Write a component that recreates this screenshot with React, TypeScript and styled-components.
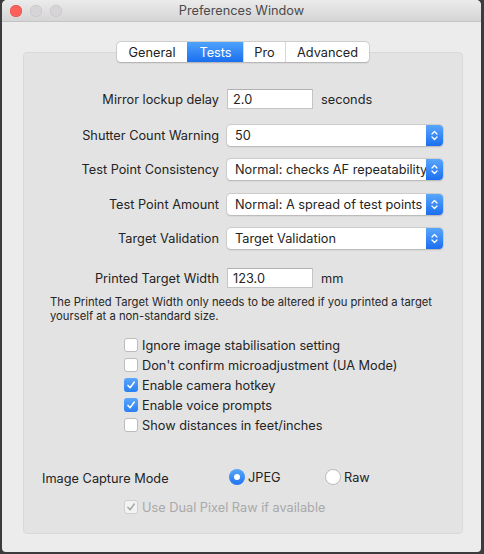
import React from "react";
import styled, { createGlobalStyle } from "styled-components";

const GlobalStyle = createGlobalStyle`
  html, body {
    margin: 0;
    padding: 0;
    background: #3c3c3c;
  }
  body {
    font-family: Inter, "Noto Sans", "Liberation Sans", sans-serif;
    font-size: 12.75px;
    color: #242424;
  }
`;

const Screen = styled.div`
  width: 484px;
  height: 554px;
  padding: 0 3px 2px 2px;
  box-sizing: border-box;
  background: #3c3c3c;
`;

const Window = styled.div`
  height: 552px;
  display: flex;
  flex-direction: column;
  background: #ececec;
  border-radius: 5px 5px 4px 4px;
  overflow: hidden;
`;

const TitleBar = styled.div`
  height: 22px;
  flex: none;
  display: flex;
  align-items: center;
  position: relative;
  background: linear-gradient(#ebebeb, #d5d5d5);
  border-bottom: 1px solid #c4c4c4;
  box-sizing: border-box;
`;

const Lights = styled.div`
  display: flex;
  gap: 8px;
  padding-left: 8px;
`;

const Light = styled.span<{ $color: string; $edge: string }>`
  width: 12px;
  height: 12px;
  border-radius: 50%;
  background: ${(p) => p.$color};
  box-shadow: inset 0 0 0 0.5px ${(p) => p.$edge};
`;

const Title = styled.div`
  position: absolute;
  left: 0;
  right: 0;
  text-align: center;
  color: #4b4b4b;
  pointer-events: none;
`;

const Body = styled.div`
  flex: 1;
  padding: 20px 18px 18px 21px;
  display: flex;
  flex-direction: column;
`;

const TabBar = styled.div`
  align-self: center;
  display: flex;
  height: 20px;
  margin-bottom: -10px;
  position: relative;
  z-index: 1;
  background: #fff;
  border-radius: 4px;
  box-shadow: 0 0 0 0.5px #b9b9b9, 0 0.5px 1.5px rgba(0, 0, 0, 0.25);
  overflow: hidden;
`;

const Tab = styled.div<{ $width: number; $active?: boolean }>`
  width: ${(p) => p.$width}px;
  box-sizing: border-box;
  display: flex;
  align-items: center;
  justify-content: center;
  color: ${(p) => (p.$active ? "#fff" : "#222")};
  background: ${(p) => (p.$active ? "linear-gradient(#4ea2fb, #1a70ef)" : "transparent")};
  border-left: 1px solid ${(p) => (p.$active ? "transparent" : "#d8d8d8")};
  &:first-child {
    border-left: none;
  }
`;

const Panel = styled.div`
  flex: 1;
  background: #e3e3e3;
  border: 1px solid #d9d9d9;
  border-radius: 4px;
  padding-top: 36px;
  display: flex;
  flex-direction: column;
`;

const Row = styled.div<{ $top: number }>`
  display: flex;
  align-items: center;
  gap: 8px;
  margin-top: ${(p) => p.$top}px;
`;

const Label = styled.div`
  width: 195px;
  flex: none;
  text-align: right;
  white-space: nowrap;
`;

const Unit = styled.div`
  white-space: nowrap;
`;

const TextField = styled.div`
  width: 86px;
  height: 20px;
  box-sizing: border-box;
  background: #fff;
  border: 1px solid #c4c4c4;
  border-top-color: #b0b0b0;
  padding-left: 5px;
  display: flex;
  align-items: center;
`;

const Popup = styled.div`
  width: 216px;
  height: 21px;
  box-sizing: border-box;
  display: flex;
  background: #fff;
  border-radius: 4px;
  box-shadow: 0 0 0 0.5px #bdbdbd, 0 0.5px 1.5px rgba(0, 0, 0, 0.22);
  overflow: hidden;
`;

const PopupText = styled.div`
  flex: 1;
  padding-left: 8px;
  display: flex;
  align-items: center;
  white-space: nowrap;
  overflow: hidden;
`;

const PopupArrows = styled.div`
  width: 17px;
  flex: none;
  display: flex;
  align-items: center;
  justify-content: center;
  background: linear-gradient(#5aa6fb, #1b6ff0);
`;

const Help = styled.p`
  margin: 7px 0 0 26px;
  font-size: 11.25px;
  line-height: 14px;
  color: #262626;
`;

const Checks = styled.div`
  margin: 15px 0 0 100px;
  display: flex;
  flex-direction: column;
  gap: 6px;
`;

const CheckRow = styled.div<{ $disabled?: boolean }>`
  display: flex;
  align-items: center;
  gap: 4px;
  height: 14px;
  color: ${(p) => (p.$disabled ? "#a9a9a9" : "#242424")};
`;

const Box = styled.span<{ $checked?: boolean; $disabled?: boolean }>`
  width: 14px;
  height: 14px;
  box-sizing: border-box;
  border-radius: 3px;
  flex: none;
  display: flex;
  align-items: center;
  justify-content: center;
  background: ${(p) =>
    p.$disabled ? "#f3f3f3" : p.$checked ? "linear-gradient(#5aa6fb, #2a7ff2)" : "#fff"};
  border: ${(p) => (p.$checked && !p.$disabled ? "none" : `1px solid ${p.$disabled ? "#cfcfcf" : "#bcbcbc"}`)};
`;

const CaptureRow = styled.div`
  margin: 37px 0 0 18px;
  display: flex;
  align-items: center;
  height: 16px;
`;

const CaptureLabel = styled.div`
  width: 187px;
  padding-top: 2px;
`;

const RadioOption = styled.div<{ $width: number }>`
  width: ${(p) => p.$width}px;
  display: flex;
  align-items: center;
  gap: 3px;
`;

const Radio = styled.span<{ $on?: boolean }>`
  width: 16px;
  height: 16px;
  box-sizing: border-box;
  border-radius: 50%;
  display: flex;
  align-items: center;
  justify-content: center;
  background: ${(p) => (p.$on ? "linear-gradient(#5aa6fb, #1f74f0)" : "#fff")};
  border: ${(p) => (p.$on ? "none" : "1px solid #bcbcbc")};
  &::after {
    content: "";
    display: ${(p) => (p.$on ? "block" : "none")};
    width: 6px;
    height: 6px;
    border-radius: 50%;
    background: #fff;
  }
`;

const DualRow = styled.div`
  margin: 15px 0 0 100px;
`;

const Check = ({ color }: { color: string }) => (
  <svg width="10" height="10" viewBox="0 0 10 10">
    <path d="M2 5.4 L4.1 7.8 L8.3 2" fill="none" stroke={color} strokeWidth="1.5" strokeLinecap="round" strokeLinejoin="round" />
  </svg>
);

const Chevrons = () => (
  <svg width="7" height="11" viewBox="0 0 7 11">
    <path d="M1 4 L3.5 1.5 L6 4 M1 7 L3.5 9.5 L6 7" fill="none" stroke="#fff" strokeWidth="1.3" strokeLinecap="round" strokeLinejoin="round" />
  </svg>
);

const Select = ({ value }: { value: string }) => (
  <Popup>
    <PopupText>{value}</PopupText>
    <PopupArrows>
      <Chevrons />
    </PopupArrows>
  </Popup>
);

const options = [
  { label: "Ignore image stabilisation setting", checked: false },
  { label: "Don't confirm microadjustment (UA Mode)", checked: false },
  { label: "Enable camera hotkey", checked: true },
  { label: "Enable voice prompts", checked: true },
  { label: "Show distances in feet/inches", checked: false },
];

export default function App() {
  return (
    <>
      <GlobalStyle />
      <Screen>
        <Window>
          <TitleBar>
            <Lights>
              <Light $color="#fc605b" $edge="#de4a44" />
              <Light $color="#d6d4d6" $edge="#c4c2c4" />
              <Light $color="#d6d4d6" $edge="#c4c2c4" />
            </Lights>
            <Title>Preferences Window</Title>
          </TitleBar>
          <Body>
            <TabBar>
              <Tab $width={70}>General</Tab>
              <Tab $width={56} $active>Tests</Tab>
              <Tab $width={42}>Pro</Tab>
              <Tab $width={84}>Advanced</Tab>
            </TabBar>
            <Panel>
              <Row $top={0}>
                <Label>Mirror lockup delay</Label>
                <TextField>2.0</TextField>
                <Unit>seconds</Unit>
              </Row>
              <Row $top={16}>
                <Label>Shutter Count Warning</Label>
                <Select value="50" />
              </Row>
              <Row $top={13}>
                <Label>Test Point Consistency</Label>
                <Select value="Normal: checks AF repeatability" />
              </Row>
              <Row $top={14}>
                <Label>Test Point Amount</Label>
                <Select value="Normal: A spread of test points" />
              </Row>
              <Row $top={13}>
                <Label>Target Validation</Label>
                <Select value="Target Validation" />
              </Row>
              <Row $top={19}>
                <Label>Printed Target Width</Label>
                <TextField>123.0</TextField>
                <Unit>mm</Unit>
              </Row>
              <Help>
                The Printed Target Width only needs to be altered if you printed a target
                <br />
                yourself at a non-standard size.
              </Help>
              <Checks>
                {options.map((o) => (
                  <CheckRow key={o.label}>
                    <Box $checked={o.checked}>{o.checked && <Check color="#fff" />}</Box>
                    {o.label}
                  </CheckRow>
                ))}
              </Checks>
              <CaptureRow>
                <CaptureLabel>Image Capture Mode</CaptureLabel>
                <RadioOption $width={96}>
                  <Radio $on />
                  JPEG
                </RadioOption>
                <RadioOption $width={60}>
                  <Radio />
                  Raw
                </RadioOption>
              </CaptureRow>
              <DualRow>
                <CheckRow $disabled>
                  <Box $checked $disabled>
                    <Check color="#a6a6a6" />
                  </Box>
                  Use Dual Pixel Raw if available
                </CheckRow>
              </DualRow>
            </Panel>
          </Body>
        </Window>
      </Screen>
    </>
  );
}
